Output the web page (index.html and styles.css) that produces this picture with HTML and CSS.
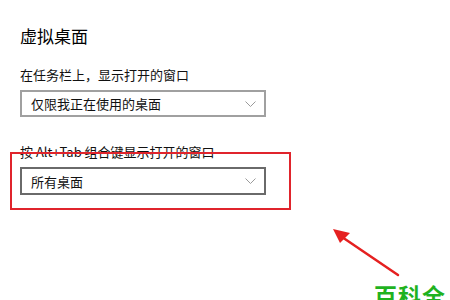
FILE: index.html
```html
<!DOCTYPE html>
<html lang="zh-CN">
<head>
    <meta charset="UTF-8">
    <title>虚拟桌面</title>
    <link rel="stylesheet" href="styles.css">
</head>
<body>
    <div class="page">
        <h1 class="title">虚拟桌面</h1>

        <div class="setting">
            <label class="label">在任务栏上，显示打开的窗口</label>
            <div class="select">
                <span>仅限我正在使用的桌面</span>
                <svg class="chevron" width="11" height="7" viewBox="0 0 11 7"><path d="M0.5 0.5 L5.5 5.5 L10.5 0.5" fill="none" stroke="#9a9a9a" stroke-width="1"/></svg>
            </div>
        </div>

        <div class="setting second">
            <label class="label">按 Alt+Tab 组合键显示打开的窗口</label>
            <div class="select active">
                <span>所有桌面</span>
                <svg class="chevron" width="11" height="7" viewBox="0 0 11 7"><path d="M0.5 0.5 L5.5 5.5 L10.5 0.5" fill="none" stroke="#9a9a9a" stroke-width="1"/></svg>
            </div>
        </div>
    </div>

    <!-- 标注 -->
    <div class="highlight"></div>
    <svg class="arrow" width="80" height="60" viewBox="0 0 80 60">
        <path d="M68 50 L12 12" stroke="#e52020" stroke-width="2.5" stroke-linecap="round"/>
        <path d="M3 4 L20 8 L10 18 Z" fill="#e52020"/>
    </svg>
    <div class="watermark">百科全</div>
</body>
</html>
```

FILE: styles.css
```css
*{
    margin: 0;
    padding: 0;
    box-sizing: border-box;
}
body{
    width: 450px;
    height: 300px;
    background-color: #fff;
    font-family: "Noto Sans CJK SC", "Liberation Sans", sans-serif;
    color: #000;
    position: relative;
    overflow: hidden;
}
.page{
    padding: 24px 0 0 20px;
    display: flex;
    flex-direction: column;
}
.title{
    font-size: 17px;
    font-weight: normal;
    line-height: 24px;
    margin-bottom: 18px;
}
.setting{
    display: flex;
    flex-direction: column;
    gap: 6px;
}
.setting.second{
    margin-top: 26px;
}
.label{
    font-size: 13px;
    line-height: 18px;
    color: #111;
}
.select{
    width: 246px;
    height: 27px;
    border: 2px solid #a0a0a0;
    display: flex;
    align-items: center;
    justify-content: space-between;
    padding: 0 8px 0 9px;
    font-size: 13px;
    color: #111;
}
.select.active{
    border-color: #6a6a6a;
    height: 28px;
}
.chevron{
    margin-top: 1px;
}
.highlight{
    position: absolute;
    left: 10px;
    top: 152px;
    width: 281px;
    height: 58px;
    border: 2px solid #e0242c;
}
.arrow{
    position: absolute;
    left: 330px;
    top: 225px;
}
.watermark{
    position: absolute;
    left: 374px;
    top: 281px;
    font-size: 23px;
    line-height: 28px;
    font-weight: bold;
    color: #1fb21f;
    white-space: nowrap;
    letter-spacing: 1px;
}
```
